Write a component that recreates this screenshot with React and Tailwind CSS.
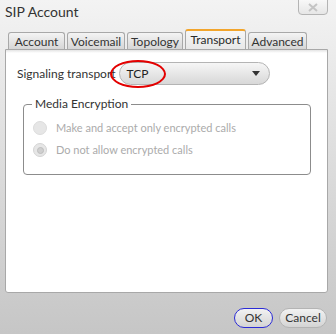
import React, { useState } from "react";

const tabs = ["Account", "Voicemail", "Topology", "Transport", "Advanced"];

const App = () => {
  const [active, setActive] = useState("Transport");

  return (
    <div
      className="w-[336px] h-[334px] flex flex-col bg-gradient-to-b from-[#f3f3f3] via-[#dcdcdc] to-[#c6c6c6] text-[#2a2a2a] overflow-hidden"
      style={{ fontFamily: 'Lato, "Open Sans", sans-serif' }}
    >
      {/* title bar */}
      <div className="h-[29px] flex items-start justify-between pl-[5px] pr-[8px]">
        <p className="pt-[1px] text-[14px] text-[#333]">SIP Account</p>
        <button className="mt-[-1px] w-[30px] h-[16px] flex items-center justify-center border border-[#b4b4b4] rounded-b-[4px] bg-gradient-to-b from-[#f8f8f8] to-[#e6e6e6]">
          <svg width="12" height="9" viewBox="0 0 12 9">
            <path d="M2 1 L10 8 M10 1 L2 8" stroke="#c4c4c4" strokeWidth="2" />
          </svg>
        </button>
      </div>

      {/* tabs */}
      <div className="h-[20px] flex items-end pl-[8px] gap-[2px]">
        {tabs.map((t) => {
          const on = t === active;
          return (
            <button
              key={t}
              onClick={() => setActive(t)}
              className={
                on
                  ? "h-[20px] w-[61px] text-[12px] leading-[16px] border border-[#a8a8a8] border-t-2 border-t-[#f2a52c] border-b-0 rounded-t-[3px] bg-gradient-to-b from-[#f6f6f6] to-[#e8e8e8] relative z-10"
                  : "h-[17px] text-[12px] leading-[15px] border border-[#a8a8a8] border-b-0 rounded-t-[3px] bg-gradient-to-b from-[#f4f4f4] to-[#d6d6d6] text-[#333] " +
                    (t === "Account" ? "w-[57px]" : t === "Voicemail" ? "w-[58px]" : t === "Topology" ? "w-[56px]" : "w-[59px]")
              }
            >
              {t}
            </button>
          );
        })}
      </div>

      {/* panel */}
      <div className="mx-[5px] w-[323px] h-[244px] bg-white border border-[#a8a8a8] rounded-b-[3px] relative">
        <div className="h-[3px] bg-gradient-to-b from-[#e4e4e4] to-white" />
        <div className="flex items-center pl-[11px] pt-[9px]">
          <span className="text-[12px] text-[#333]">Signaling transport</span>
          <div className="ml-[3px] w-[151px] h-[23px] rounded-full border border-[#b4b4b4] bg-gradient-to-b from-[#f6f6f6] to-[#d8d8d8] flex items-center justify-between pl-[7px] pr-[9px]">
            <span className="text-[12px] text-[#222]">TCP</span>
            <svg width="8" height="5" viewBox="0 0 8 5">
              <path d="M0 0 H8 L4 5 Z" fill="#333" />
            </svg>
          </div>
        </div>
        <div className="absolute left-[104px] top-[10px] w-[56px] h-[28px] rounded-[50%] border-2 border-[#e30000]" />

        <div className="mt-[19px] ml-[17px] w-[288px] h-[71px] border border-[#8c8c8c] rounded-[4px] relative">
          <span className="absolute left-[8px] top-[-9px] bg-white px-[3px] text-[12px] text-[#333] leading-[16px]">Media Encryption</span>
          <div className="pt-[15px] pl-[9px] flex flex-col gap-[6px]">
            <label className="h-[16px] flex items-center gap-[9px]">
              <span className="w-[14px] h-[14px] rounded-full bg-[#e6e6e6] border border-[#dcdcdc]" />
              <span className="text-[11px] text-[#ababab]">Make and accept only encrypted calls</span>
            </label>
            <label className="h-[16px] flex items-center gap-[9px]">
              <span className="w-[14px] h-[14px] rounded-full bg-[#e6e6e6] border border-[#d4d4d4] flex items-center justify-center">
                <span className="w-[7px] h-[7px] rounded-full bg-[#cfcfcf] border border-[#bdbdbd]" />
              </span>
              <span className="text-[11px] text-[#ababab]">Do not allow encrypted calls</span>
            </label>
          </div>
        </div>
      </div>

      {/* footer */}
      <div className="flex justify-end gap-[6px] pr-[9px] pt-[15px]">
        <button className="w-[39px] h-[20px] rounded-full border border-[#2b2bd6] bg-gradient-to-b from-[#f2f2f2] to-[#d4d4d4] text-[12px] text-[#333] leading-[16px]">
          OK
        </button>
        <button className="w-[48px] h-[20px] rounded-full border border-[#b4b4b4] bg-gradient-to-b from-[#f2f2f2] to-[#d4d4d4] text-[12px] text-[#333] leading-[16px]">
          Cancel
        </button>
      </div>
    </div>
  );
};

export default App;
